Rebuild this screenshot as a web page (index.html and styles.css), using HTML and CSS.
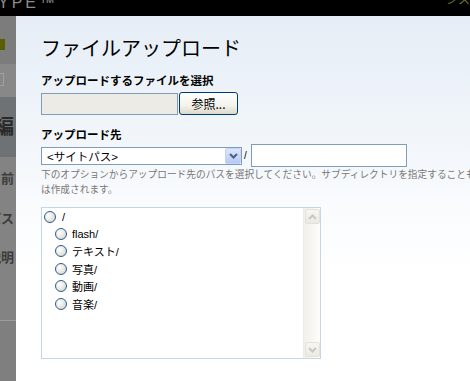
FILE: index.html
```html
<!DOCTYPE html>
<html lang="ja">
<head>
    <meta charset="UTF-8">
    <title>ファイルアップロード</title>
    <link rel="stylesheet" href="styles.css">
</head>
<body>
    <div class="topbar">
        <span class="brand">YPE™</span>
        <span class="user">ジス</span>
    </div>
    <div class="main">
        <!-- 背後のページ（ダイアログに隠れている部分） -->
        <div class="side">
            <div class="side-nav"><span class="chip"></span></div>
            <div class="side-tools"><span class="tool"></span></div>
            <div class="side-title">編</div>
            <div class="side-fields">
                <div class="field">名前</div>
                <div class="field">パス</div>
                <div class="field">説明</div>
            </div>
            <div class="side-rest"></div>
        </div>

        <div class="dialog">
            <h1 class="dialog-title">ファイルアップロード</h1>

            <div class="label">アップロードするファイルを選択</div>
            <div class="file-row">
                <span class="file-field"></span>
                <button class="browse-btn">参照...</button>
            </div>

            <div class="label label-dest">アップロード先</div>
            <div class="dest-row">
                <div class="select">
                    <span class="select-text">&lt;サイトパス&gt;</span>
                    <span class="select-btn">
                        <svg width="9" height="6" viewBox="0 0 9 6"><path d="M1 1l3.5 3.5L8 1" fill="none" stroke="#4d6185" stroke-width="2"/></svg>
                    </span>
                </div>
                <span class="slash">/</span>
                <span class="text-field"></span>
            </div>
            <p class="help">下のオプションからアップロード先のパスを選択してください。サブディレクトリを指定することもできます。存在しないディレクトリ<br>は作成されます。</p>

            <div class="listbox">
                <ul class="tree">
                    <li class="node"><span class="radio"></span><span class="name">/</span></li>
                    <li class="node child"><span class="radio"></span><span class="name">flash/</span></li>
                    <li class="node child"><span class="radio"></span><span class="name">テキスト/</span></li>
                    <li class="node child"><span class="radio"></span><span class="name">写真/</span></li>
                    <li class="node child"><span class="radio"></span><span class="name">動画/</span></li>
                    <li class="node child"><span class="radio"></span><span class="name">音楽/</span></li>
                </ul>
                <div class="scrollbar">
                    <span class="sb-btn">
                        <svg width="9" height="6" viewBox="0 0 9 6"><path d="M1 5l3.5-3.5L8 5" fill="none" stroke="#c9c8c0" stroke-width="2"/></svg>
                    </span>
                    <span class="sb-btn">
                        <svg width="9" height="6" viewBox="0 0 9 6"><path d="M1 1l3.5 3.5L8 1" fill="none" stroke="#c9c8c0" stroke-width="2"/></svg>
                    </span>
                </div>
            </div>
        </div>
    </div>
</body>
</html>
```

FILE: styles.css
```css
body {
    margin: 0;
    width: 470px;
    height: 381px;
    overflow: hidden;
    background: #000;
    font-family: "Liberation Sans", "Noto Sans CJK JP", sans-serif;
}

/* 上部バー */
.topbar {
    height: 16px;
    display: flex;
    justify-content: space-between;
    overflow: hidden;
}

.brand {
    margin: -5px 0 0 -2px;
    font-size: 16px;
    line-height: 16px;
    letter-spacing: 3px;
    color: #8c8c8c;
}

.user {
    margin-top: -8px;
    font-size: 12px;
    line-height: 16px;
    color: #6b7a1a;
}

.main {
    display: flex;
    height: 365px;
}

/* 左側：背後のページ */
.side {
    width: 16px;
    flex-shrink: 0;
    display: flex;
    flex-direction: column;
    overflow: hidden;
    background: #7c7c7c;
}

.side-nav {
    height: 48px;
    padding-top: 23px;
    box-sizing: border-box;
}

.chip {
    display: block;
    width: 5px;
    height: 11px;
    background: #5a5e00;
}

.side-tools {
    height: 33px;
    padding-top: 9px;
    box-sizing: border-box;
    background: #888;
}

.tool {
    display: block;
    width: 3px;
    height: 11px;
    border: 1px solid #a0a0a0;
    border-left: none;
}

.side-title {
    height: 60px;
    background: #6e7274;
    font-size: 20px;
    font-weight: bold;
    line-height: 60px;
    color: #2a2a2a;
    text-align: right;
    white-space: nowrap;
    padding-right: 2px;
    direction: rtl;
}

.side-fields {
    height: 164px;
    background: #838383;
    border-bottom: 1px solid #9c9c9c;
    padding-top: 14px;
    box-sizing: border-box;
}

.field {
    height: 39.5px;
    font-size: 13px;
    font-weight: bold;
    line-height: 16px;
    color: #3c3c3c;
    text-align: right;
    white-space: nowrap;
    padding-right: 2px;
    direction: rtl;
}

.side-rest {
    flex: 1;
    background: #7f7f7f;
}

/* ダイアログ */
.dialog {
    flex: 1;
    overflow: hidden;
    padding-left: 25px;
    background: linear-gradient(to bottom, #e5edf6, #f9fbfd 190px, #fff 260px);
}

.dialog-title {
    margin: 20px 0 0;
    font-size: 20px;
    line-height: 24px;
    font-weight: normal;
    color: #000;
    font-family: "Noto Sans CJK JP", sans-serif;
}

.label {
    margin-top: 14px;
    font-size: 11.5px;
    line-height: 14px;
    font-weight: bold;
    color: #000;
}

.label-dest {
    margin-top: 13px;
}

.file-row {
    display: flex;
    align-items: center;
    margin-top: 4px;
    height: 23px;
}

.file-field {
    width: 137px;
    height: 22px;
    box-sizing: border-box;
    background: #ecebe5;
    border: 1px solid #7f9db9;
}

.browse-btn {
    width: 59px;
    height: 23px;
    margin: 0 0 0 1px;
    padding: 0;
    border: 1px solid #003c74;
    border-radius: 3px;
    background: linear-gradient(to bottom, #fff, #f3f2ec 60%, #dcd9cc);
    font-family: "Noto Sans CJK JP", sans-serif;
    font-size: 12px;
    color: #000;
}

.dest-row {
    display: flex;
    align-items: center;
    margin-top: 2px;
    height: 23px;
}

.select {
    width: 201px;
    height: 18px;
    box-sizing: border-box;
    border: 1px solid #7f9db9;
    background: #fff;
    display: flex;
    align-items: center;
    justify-content: space-between;
}

.select-text {
    padding-left: 5px;
    font-size: 11.5px;
    color: #000;
}

.select-btn {
    width: 16px;
    height: 16px;
    box-sizing: border-box;
    border: 1px solid #c3d3fd;
    border-radius: 2px;
    background: linear-gradient(to bottom, #dce6fd, #b6c9f6);
    display: flex;
    align-items: center;
    justify-content: center;
}

.slash {
    margin: 0 4px 0 2px;
    font-size: 10px;
    color: #000;
}

.text-field {
    width: 156px;
    height: 23px;
    box-sizing: border-box;
    border: 1px solid #7f9db9;
    background: #fff;
}

.help {
    margin: 0;
    font-size: 9.7px;
    line-height: 15px;
    color: #777;
    white-space: nowrap;
}

/* ディレクトリ一覧 */
.listbox {
    margin-top: 10px;
    width: 280px;
    height: 152px;
    box-sizing: border-box;
    border: 1px solid #c5d6e4;
    background: #fff;
    display: flex;
}

.tree {
    flex: 1;
    list-style: none;
    margin: 0;
    padding: 0 0 0 2px;
}

.node {
    display: flex;
    align-items: center;
    height: 17.4px;
    font-size: 11px;
    color: #000;
}

.node.child {
    padding-left: 11px;
}

.radio {
    width: 12px;
    height: 12px;
    box-sizing: border-box;
    border: 1px solid #2c5d8f;
    border-radius: 50%;
    background: radial-gradient(circle at 35% 35%, #fff, #e6e5de 55%, #c9c8bf);
    margin-right: 6px;
}

.node.child .radio {
    margin-right: 5px;
}

.scrollbar {
    width: 17px;
    box-sizing: border-box;
    border-left: 1px solid #ecebe4;
    background: linear-gradient(to right, #f1f0ea, #fdfdfa);
    display: flex;
    flex-direction: column;
    justify-content: space-between;
    padding: 1px;
}

.sb-btn {
    width: 15px;
    height: 15px;
    box-sizing: border-box;
    border: 1px solid #e2e1da;
    border-radius: 2px;
    background: linear-gradient(to bottom, #f7f6f2, #ebeae4);
    display: flex;
    align-items: center;
    justify-content: center;
}
```
